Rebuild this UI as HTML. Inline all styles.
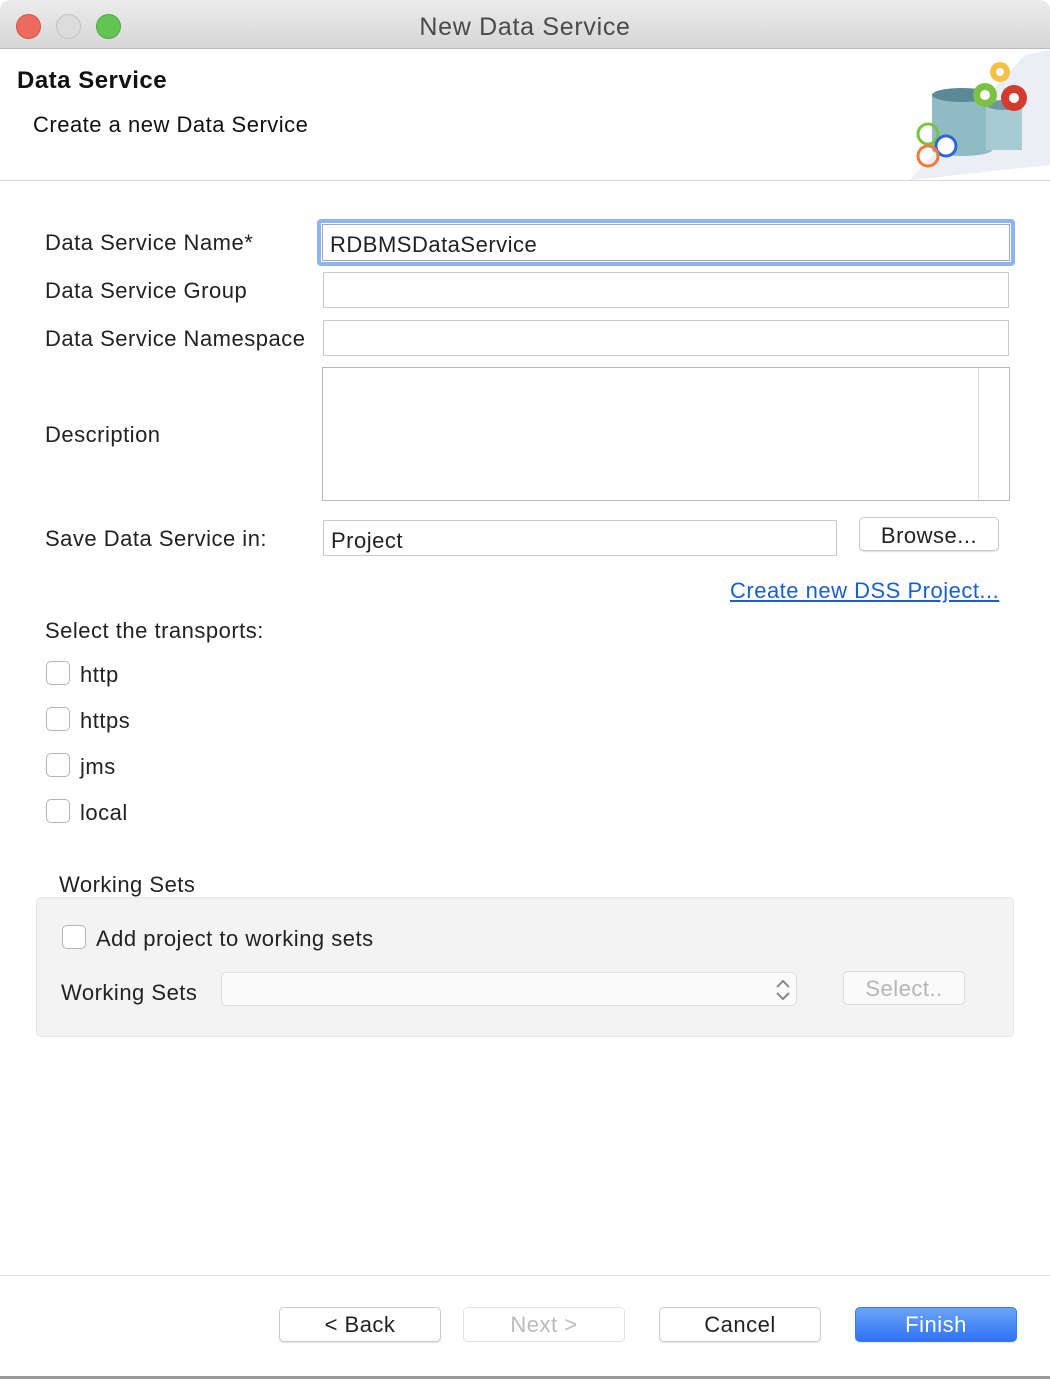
<!DOCTYPE html>
<html><head><style>
*{box-sizing:border-box;margin:0;padding:0}
body{width:1050px;height:1379px;background:#fff;font-family:"Liberation Sans",sans-serif;font-size:22px;letter-spacing:.5px;color:#222;position:relative;overflow:hidden}
.a{position:absolute}
.tb{left:0;top:0;width:1050px;height:49px;background:linear-gradient(#ececec,#d6d6d6);border-bottom:1px solid #b9b9b9;border-radius:10px 10px 0 0}
.dot{width:25px;height:25px;border-radius:50%;top:14px}
.lbl{left:45px}
.inp{background:#fff;border:1px solid #c8c8c8}
.cb{width:24px;height:24px;border:1px solid #b5b5b5;border-radius:5px;background:#fff;left:46px}
.btn{background:#fff;border:1px solid #c9c9c9;border-radius:5px;text-align:center;box-shadow:0 1px 1px rgba(0,0,0,.12);line-height:34px}
</style></head><body>
<div class="a tb"></div>
<div class="a dot" style="left:16px;background:#ed6a5e;border:1px solid #d65448"></div>
<div class="a dot" style="left:56px;background:#dcdcdc;border:1px solid #c3c3c3"></div>
<div class="a dot" style="left:96px;background:#61c554;border:1px solid #50a846"></div>
<div class="a" style="left:0;width:1050px;top:13px;text-align:center;font-size:25px;letter-spacing:.7px;color:#4a4a4a">New Data Service</div>

<div class="a" style="left:0;top:180px;width:1050px;height:1px;background:#d8d8d8"></div>
<div class="a" style="left:17px;top:67px;font-weight:bold;font-size:24px;letter-spacing:.5px;color:#111">Data Service</div>
<div class="a" style="left:33px;top:112px;color:#111">Create a new Data Service</div>
<svg class="a" style="left:900px;top:50px" width="150" height="130" viewBox="0 0 150 130">
<polygon points="10,130 150,115 150,0 125,5" fill="#eceef6"/>
<rect x="32" y="45" width="60" height="55" fill="#8fbcc4"/><ellipse cx="62" cy="45" rx="30" ry="7" fill="#5b8a96"/><ellipse cx="62" cy="100" rx="30" ry="6" fill="#8fbcc4"/>
<rect x="86" y="55" width="36" height="45" fill="#a7cbd2"/><ellipse cx="104" cy="55" rx="18" ry="5" fill="#6f98a3"/>
<circle cx="100" cy="22" r="10" fill="#f5c046"/><circle cx="100" cy="22" r="4" fill="#fff"/>
<circle cx="85" cy="45" r="12" fill="#7cc242"/><circle cx="85" cy="45" r="5" fill="#fff"/>
<circle cx="114" cy="48" r="13" fill="#d33a30"/><circle cx="114" cy="48" r="5" fill="#fff"/>
<circle cx="28" cy="84" r="10" fill="none" stroke="#7cc242" stroke-width="3"/>
<circle cx="46" cy="96" r="10" fill="#fff" stroke="#2d64d8" stroke-width="3"/>
<circle cx="28" cy="106" r="10" fill="none" stroke="#ee7a3c" stroke-width="3"/>
</svg>

<div class="a lbl" style="top:230px">Data Service Name*</div>
<div class="a lbl" style="top:278px">Data Service Group</div>
<div class="a lbl" style="top:326px">Data Service Namespace</div>
<div class="a lbl" style="top:422px">Description</div>
<div class="a lbl" style="top:526px">Save Data Service in:</div>

<div class="a" style="left:317px;top:219px;width:698px;height:47px;border:4px solid #8db4f0;border-radius:4px;background:#fff"></div>
<div class="a inp" style="left:322px;top:224px;width:688px;height:37px;border-color:#9ab;padding:7px 7px">RDBMSDataService</div>
<div class="a inp" style="left:323px;top:272px;width:686px;height:36px"></div>
<div class="a inp" style="left:323px;top:320px;width:686px;height:36px"></div>
<div class="a inp" style="left:322px;top:367px;width:688px;height:134px;border-color:#b8b8b8"></div>
<div class="a" style="left:978px;top:368px;width:1px;height:132px;background:#ddd"></div>
<div class="a inp" style="left:323px;top:520px;width:514px;height:36px;padding:7px 7px">Project</div>
<div class="a btn" style="left:859px;top:517px;width:140px;height:34px;line-height:36px">Browse...</div>
<div class="a" style="left:730px;top:578px;color:#1a5fd0;text-decoration:underline">Create new DSS Project...</div>

<div class="a lbl" style="top:618px">Select the transports:</div>
<div class="a cb" style="top:661px"></div><div class="a" style="left:80px;top:662px">http</div>
<div class="a cb" style="top:707px"></div><div class="a" style="left:80px;top:708px">https</div>
<div class="a cb" style="top:753px"></div><div class="a" style="left:80px;top:754px">jms</div>
<div class="a cb" style="top:799px"></div><div class="a" style="left:80px;top:800px">local</div>

<div class="a" style="left:59px;top:872px">Working Sets</div>
<div class="a" style="left:36px;top:897px;width:978px;height:140px;background:#f3f3f3;border:1px solid #e6e6e6;border-radius:5px"></div>
<div class="a cb" style="left:62px;top:925px"></div><div class="a" style="left:96px;top:926px">Add project to working sets</div>
<div class="a" style="left:61px;top:980px">Working Sets</div>
<div class="a" style="left:221px;top:972px;width:576px;height:34px;background:#fafafa;border:1px solid #ddd;border-radius:5px"></div>
<svg class="a" style="left:774px;top:977px" width="18" height="26"><path d="M3 10l6-6 6 6M3 16l6 6 6-6" fill="none" stroke="#888" stroke-width="2"/></svg>
<div class="a btn" style="left:843px;top:971px;width:122px;height:34px;color:#b5b5b5;background:#fafafa;border-color:#ddd;box-shadow:none">Select..</div>

<div class="a" style="left:0;top:1275px;width:1050px;height:1px;background:#ddd"></div>
<div class="a btn" style="left:279px;top:1307px;width:162px;height:35px">&lt; Back</div>
<div class="a btn" style="left:463px;top:1307px;width:162px;height:35px;color:#bbb;border-color:#e2e2e2;box-shadow:none">Next &gt;</div>
<div class="a btn" style="left:659px;top:1307px;width:162px;height:35px">Cancel</div>
<div class="a btn" style="left:855px;top:1307px;width:162px;height:35px;color:#fff;background:linear-gradient(#6aa5f8,#2f72f5);border-color:#3b7cf2">Finish</div>
<div class="a" style="left:0;top:1376px;width:1050px;height:3px;background:#9a9a9a"></div>
</body></html>
